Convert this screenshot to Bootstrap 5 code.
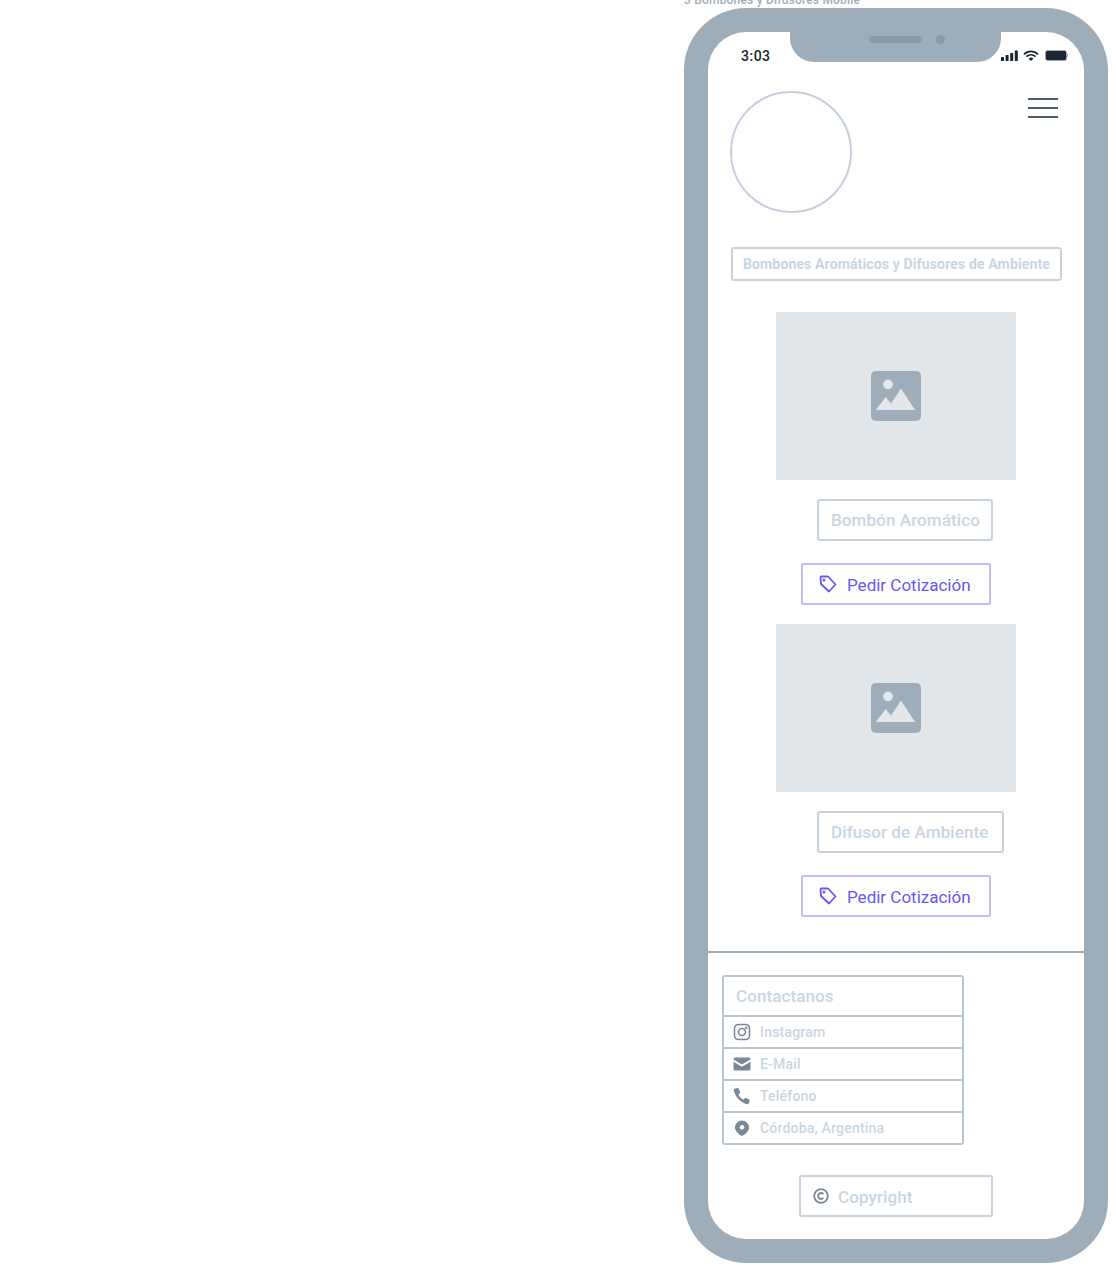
<!DOCTYPE html>
<html lang="es">
<head>
  <meta charset="UTF-8">
  <title>Bombones y Difusores Mobile</title>
  <link href="https://cdn.jsdelivr.net/npm/bootstrap@5.3.3/dist/css/bootstrap.min.css" rel="stylesheet">
  <style>
    body {
      background: #fff;
      font-family: Roboto, "Liberation Sans", sans-serif;
      overflow: hidden;
    }
    .artboard {
      width: 424px;
      margin-left: 684px;
    }
    .artboard-title {
      height: 16px;
      margin-top: -8px;
      font-size: 12px;
      line-height: 16px;
      font-weight: 500;
      letter-spacing: .2px;
      color: #9eadba;
    }
    .phone {
      position: relative;
      width: 424px;
      height: 1255px;
      padding: 24px;
      background: #9eadba;
      border-radius: 62px;
    }
    .screen {
      height: 1207px;
      background: #fff;
      border-radius: 38px;
      overflow: hidden;
    }
    .notch {
      position: absolute;
      top: 24px;
      left: 106px;
      width: 211px;
      height: 30px;
      padding-left: 79px;
      background: #9eadba;
      border-radius: 0 0 24px 24px;
    }
    .notch-speaker {
      width: 53px;
      height: 7px;
      margin-top: 4px;
      border-radius: 4px;
      background: #8c9aa7;
    }
    .notch-camera {
      width: 9px;
      height: 9px;
      margin: 3px 0 0 14px;
      border-radius: 50%;
      background: #8c9aa7;
    }
    .status-bar {
      height: 48px;
      padding: 14px 16px 0 33px;
    }
    .status-bar svg {
      margin-top: 4px;
    }
    .status-time {
      font-size: 14px;
      line-height: 20px;
      font-weight: 500;
      letter-spacing: .5px;
      color: #1b2530;
    }
    .top-row {
      height: 132px;
      padding: 11px 26px 0 22px;
    }
    .avatar {
      width: 122px;
      height: 122px;
      border: 2px solid #c3d0dc;
      border-radius: 50%;
    }
    .burger {
      width: 30px;
      height: 20px;
      margin-top: 7px;
      border-top: 2px solid #4b5c6b;
      border-bottom: 2px solid #4b5c6b;
      position: relative;
    }
    .burger::after {
      content: "";
      position: absolute;
      left: 0;
      right: 0;
      top: 7px;
      height: 2px;
      background: #4b5c6b;
    }
    .title-box {
      width: 331px;
      height: 34px;
      margin: 35px 0 0 23px;
      border: 2px solid #c6d3df;
      border-radius: 3px;
      font-size: 14px;
      line-height: 30px;
      font-weight: 700;
      letter-spacing: .14px;
      color: #c9d6e2;
      text-align: center;
      white-space: nowrap;
    }
    .image-slot {
      width: 240px;
      height: 168px;
      margin-left: 68px;
      background: #e2e7eb;
    }
    .slot-first {
      margin-top: 31px;
    }
    .slot-next {
      margin-top: 19px;
    }
    .name-box {
      height: 42px;
      margin: 19px 0 0 109px;
      padding: 0 12px;
      border: 2px solid #c6d3df;
      border-radius: 3px;
      font-size: 17px;
      line-height: 38px;
      font-weight: 500;
      letter-spacing: .1px;
      color: #c9d6e2;
      white-space: nowrap;
    }
    .name-short {
      width: 176px;
    }
    .name-long {
      width: 187px;
    }
    .quote-btn {
      width: 190px;
      height: 42px;
      margin: 22px 0 0 93px;
      padding: 0 0 0 16px;
      gap: 10px;
      border: 2px solid #c2bbff;
      border-radius: 3px;
      font-size: 17px;
      line-height: 38px;
      color: #6558f5;
      background: #fff;
    }
    .quote-label {
      margin-top: 2px;
    }
    .divider {
      height: 2px;
      margin: 34px 0 0;
      background: #9eadba;
      opacity: 1;
      border: 0;
    }
    .contact-list {
      width: 242px;
      margin: 22px 0 0 14px;
      border-radius: 3px;
    }
    .contact-list .list-group-item {
      height: 34px;
      margin-top: -2px;
      padding: 0 9px;
      gap: 9px;
      border: 2px solid #b8c5d2;
      font-size: 14px;
      line-height: 30px;
      font-weight: 500;
      letter-spacing: .2px;
      color: #c9d6e2;
    }
    .contact-list .list-group-item:first-child {
      height: 42px;
      margin-top: 0;
      padding: 0 12px;
      font-size: 17px;
      line-height: 38px;
      letter-spacing: .1px;
    }
    .contact-icon {
      width: 18px;
      height: 18px;
      flex: none;
    }
    .copyright-box {
      width: 194px;
      height: 42px;
      margin: 30px 0 0 91px;
      padding-left: 12px;
      gap: 9px;
      border: 2px solid #c6d3df;
      border-radius: 3px;
      font-size: 17px;
      font-weight: 500;
      letter-spacing: .1px;
      color: #c9d6e2;
    }
    .copyright-label {
      margin-top: 3px;
    }
  </style>
</head>
<body>

<div class="artboard">
  <div class="artboard-title">3 Bombones y Difusores Mobile</div>
  <div class="phone">
    <div class="notch d-flex align-items-start">
      <div class="notch-speaker"></div>
      <div class="notch-camera"></div>
    </div>
    <div class="screen">
      <div class="status-bar d-flex justify-content-between align-items-start">
        <span class="status-time">3:03</span>
        <svg width="67" height="12" viewBox="0 0 67 12">
          <rect x="0" y="7" width="3" height="4" rx=".6" fill="#1b2530"/>
          <rect x="4.600" y="5" width="3" height="6" rx=".6" fill="#1b2530"/>
          <rect x="9.200" y="3" width="3" height="8" rx=".6" fill="#1b2530"/>
          <rect x="13.800" y="0.500" width="3" height="10.500" rx=".6" fill="#1b2530"/>
          <path d="M23 4.300a10 10 0 0 1 14 0M25.400 6.600a6.600 6.600 0 0 1 9.200 0" fill="none" stroke="#1b2530" stroke-width="1.700"/>
          <path d="M27.600 8.600a3.400 3.400 0 0 1 4.800 0L30 11z" fill="#1b2530"/>
          <rect x="44.500" y="0.500" width="21" height="10" rx="2.200" fill="#1b2530" stroke="#9aa5b1"/>
          <rect x="66" y="4" width="1" height="3" fill="#9aa5b1"/>
        </svg>
      </div>

      <div class="top-row d-flex justify-content-between align-items-start">
        <div class="avatar"></div>
        <div class="burger"></div>
      </div>

      <div class="title-box">Bombones Aromáticos y Difusores de Ambiente</div>

      <div class="image-slot slot-first d-flex align-items-center justify-content-center">
        <svg width="50" height="50" viewBox="0 0 50 50">
          <rect width="50" height="50" rx="5" fill="#9eadba"/>
          <circle cx="17" cy="13.500" r="4.800" fill="#e2e7eb"/>
          <path d="M5 39 L14.500 26 L20 32.500 L30 17.500 L44 39 Z" fill="#e2e7eb"/>
        </svg>
      </div>
      <div class="name-box name-short">Bombón Aromático</div>
      <button class="btn quote-btn d-flex align-items-center" type="button">
        <svg width="18" height="18" viewBox="0 0 18 18" fill="none" stroke="#6558f5" stroke-width="1.800" stroke-linejoin="round">
          <path d="M1.500 2.500 L2 1.500 L9 1.500 L16.500 9.500 L10 16.500 L2 9 Z"/>
          <circle cx="5" cy="5" r=".6" fill="#6558f5"/>
        </svg>
        <span class="quote-label">Pedir Cotización</span>
      </button>

      <div class="image-slot slot-next d-flex align-items-center justify-content-center">
        <svg width="50" height="50" viewBox="0 0 50 50">
          <rect width="50" height="50" rx="5" fill="#9eadba"/>
          <circle cx="17" cy="13.500" r="4.800" fill="#e2e7eb"/>
          <path d="M5 39 L14.500 26 L20 32.500 L30 17.500 L44 39 Z" fill="#e2e7eb"/>
        </svg>
      </div>
      <div class="name-box name-long">Difusor de Ambiente</div>
      <button class="btn quote-btn d-flex align-items-center" type="button">
        <svg width="18" height="18" viewBox="0 0 18 18" fill="none" stroke="#6558f5" stroke-width="1.800" stroke-linejoin="round">
          <path d="M1.500 2.500 L2 1.500 L9 1.500 L16.500 9.500 L10 16.500 L2 9 Z"/>
          <circle cx="5" cy="5" r=".6" fill="#6558f5"/>
        </svg>
        <span class="quote-label">Pedir Cotización</span>
      </button>

      <hr class="divider">

      <ul class="list-group contact-list">
        <li class="list-group-item">Contactanos</li>
        <li class="list-group-item d-flex align-items-center">
          <svg class="contact-icon" viewBox="0 0 18 18" fill="none" stroke="#788896" stroke-width="1.600">
            <rect x="1.500" y="1.500" width="15" height="15" rx="4"/>
            <circle cx="9" cy="9" r="3.500"/>
            <circle cx="13.200" cy="4.800" r=".5" fill="#788896"/>
          </svg>
          <span>Instagram</span>
        </li>
        <li class="list-group-item d-flex align-items-center">
          <svg class="contact-icon" viewBox="0 0 18 18" fill="#788896">
            <path d="M2 2.500h14a1.500 1.500 0 0 1 1.500 1.500v.5L9 9.500.5 4.500V4A1.500 1.500 0 0 1 2 2.500z"/>
            <path d="M.5 6.700 9 11.700l8.500-5V14a1.500 1.500 0 0 1-1.500 1.500H2A1.500 1.500 0 0 1 .5 14z"/>
          </svg>
          <span>E-Mail</span>
        </li>
        <li class="list-group-item d-flex align-items-center">
          <svg class="contact-icon" viewBox="0 0 18 18" fill="#788896">
            <path d="M4.200 1 1.400 1.800C.9 2 .7 2.500.8 3c1 6.500 6.800 12.800 13.500 14.300.5.100 1-.1 1.200-.6l1.200-2.900c.2-.5 0-1-.4-1.200l-3.300-1.600c-.4-.2-.9-.1-1.200.3l-1.200 1.500C8.200 11.600 6.400 9.700 5.400 7.400l1.500-1.200c.4-.3.500-.8.300-1.200L5.400 1.500C5.200 1.100 4.700.9 4.200 1z"/>
          </svg>
          <span>Teléfono</span>
        </li>
        <li class="list-group-item d-flex align-items-center">
          <svg class="contact-icon" viewBox="0 0 18 18">
            <path d="M9 1.500a7 7 0 0 1 7 7c0 3.700-3.500 6.600-7 8.500-3.500-1.900-7-4.800-7-8.500a7 7 0 0 1 7-7z" fill="#788896"/>
            <circle cx="9" cy="8.300" r="2.200" fill="#fff"/>
          </svg>
          <span>Córdoba, Argentina</span>
        </li>
      </ul>

      <div class="copyright-box d-flex align-items-center">
        <svg width="16" height="16" viewBox="0 0 16 16" fill="none" stroke="#788896" stroke-width="1.800">
          <circle cx="8" cy="8" r="6.800"/>
          <path d="M10.500 6.200a3 3 0 1 0 0 3.600"/>
        </svg>
        <span class="copyright-label">Copyright</span>
      </div>
    </div>
  </div>
</div>

<script src="https://cdn.jsdelivr.net/npm/bootstrap@5.3.3/dist/js/bootstrap.bundle.min.js"></script>
</body>
</html>
